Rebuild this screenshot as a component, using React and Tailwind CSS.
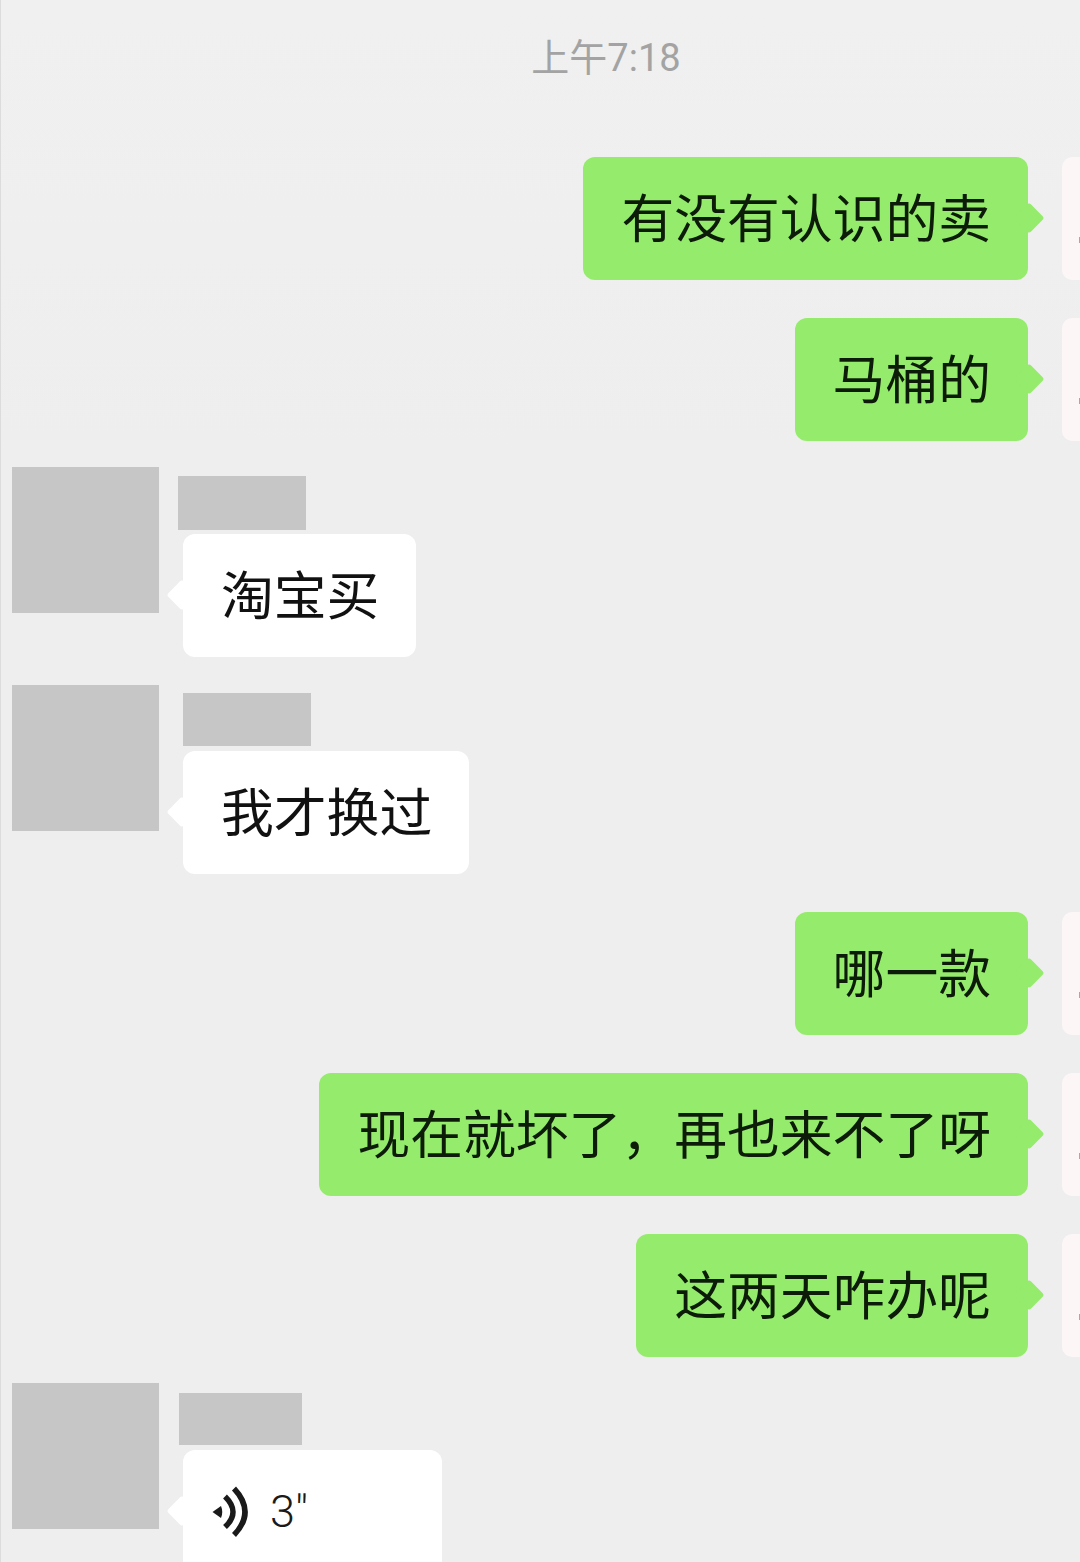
const VoiceIcon = () => (
  <svg width="40" height="54" viewBox="0 0 40 54" fill="none" className="shrink-0">
    <path d="M2.5 27 L11 21 Q13.5 27 11 33 Z" fill="#1a1a1a" />
    <path d="M15 11.5 Q31 27 15 42" stroke="#1a1a1a" strokeWidth="5.5" />
    <path d="M24 3.5 Q46 27 24 50" stroke="#1a1a1a" strokeWidth="5.5" />
  </svg>
);

const Sent = ({ text, className = "" }) => (
  <div className={`flex justify-end items-center ${className}`}>
    <div className="relative h-[123px] flex items-center bg-[#95eb6c] rounded-[12px] pl-[38px] pr-[37px] text-[52.8px] leading-none text-[#0c1c08] whitespace-nowrap mr-[34px]">
      <span className="absolute right-[-12px] top-[50px] w-[22px] h-[22px] rotate-45 rounded-[3px] bg-[#95eb6c]" />
      <span className="relative -top-[3px]">{text}</span>
    </div>
    <div className="relative w-[18px] h-[123px] rounded-l-[10px] bg-[#fdf6f7]">
      <span className="absolute right-0 top-[80px] w-[1px] h-[6px] bg-[#a8a8a8]" />
    </div>
  </div>
);

const Bubble = ({ children, className = "" }) => (
  <div className={`relative h-[123px] flex items-center bg-white rounded-[12px] text-[52.8px] leading-none text-[#111111] whitespace-nowrap ml-[24px] ${className}`}>
    <span className="absolute left-[-12px] top-[50px] w-[22px] h-[22px] rotate-45 rounded-[3px] bg-white" />
    <div className="relative flex items-center">{children}</div>
  </div>
);

const Received = ({ nameW, nameH, nameMl, nameMt, gap, children, className = "" }) => (
  <div className={`flex items-start pl-[11px] ${className}`}>
    <div className="w-[147px] h-[146px] shrink-0 bg-[#c6c6c6]" />
    <div className="flex flex-col items-start">
      <div
        className="bg-[#c6c6c6]"
        style={{ width: nameW, height: nameH, marginLeft: nameMl, marginTop: nameMt, marginBottom: gap }}
      />
      {children}
    </div>
  </div>
);

const BubbleText = ({ children }) => <span className="relative -top-[3px]">{children}</span>;

export default function App() {
  return (
    <div className="w-[1080px] h-[1562px] overflow-hidden border-l border-[#dcdcdc] bg-linear-to-b from-[#f0f0f0] to-[#eeeeee] to-[30%] font-['Noto_Sans_CJK_SC',sans-serif]">
      <div className="h-[157px] pt-[36px] pl-[131px] flex justify-center items-start">
        <span className="text-[38px] leading-[44px] text-[#a3a3a3] font-['Roboto','Noto_Sans_CJK_SC',sans-serif]">上午7:18</span>
      </div>
      <Sent text="有没有认识的卖" />
      <Sent text="马桶的" className="mt-[38px]" />
      <Received nameW={128} nameH={54} nameMl={19} nameMt={9} gap={4} className="mt-[26px]">
        <Bubble className="pl-[38px] pr-[37px]"><BubbleText>淘宝买</BubbleText></Bubble>
      </Received>
      <Received nameW={128} nameH={53} nameMl={24} nameMt={8} gap={5} className="mt-[28px]">
        <Bubble className="pl-[38px] pr-[37px]"><BubbleText>我才换过</BubbleText></Bubble>
      </Received>
      <Sent text="哪一款" className="mt-[38px]" />
      <Sent text="现在就坏了，再也来不了呀" className="mt-[38px]" />
      <Sent text="这两天咋办呢" className="mt-[38px]" />
      <Received nameW={123} nameH={52} nameMl={20} nameMt={10} gap={5} className="mt-[26px]">
        <Bubble className="w-[259px] pl-[27px]">
          <VoiceIcon />
          <span className="ml-[20px] text-[45px] font-light text-[#1a1a1a] font-['Roboto',sans-serif]">3"</span>
        </Bubble>
      </Received>
    </div>
  );
}
